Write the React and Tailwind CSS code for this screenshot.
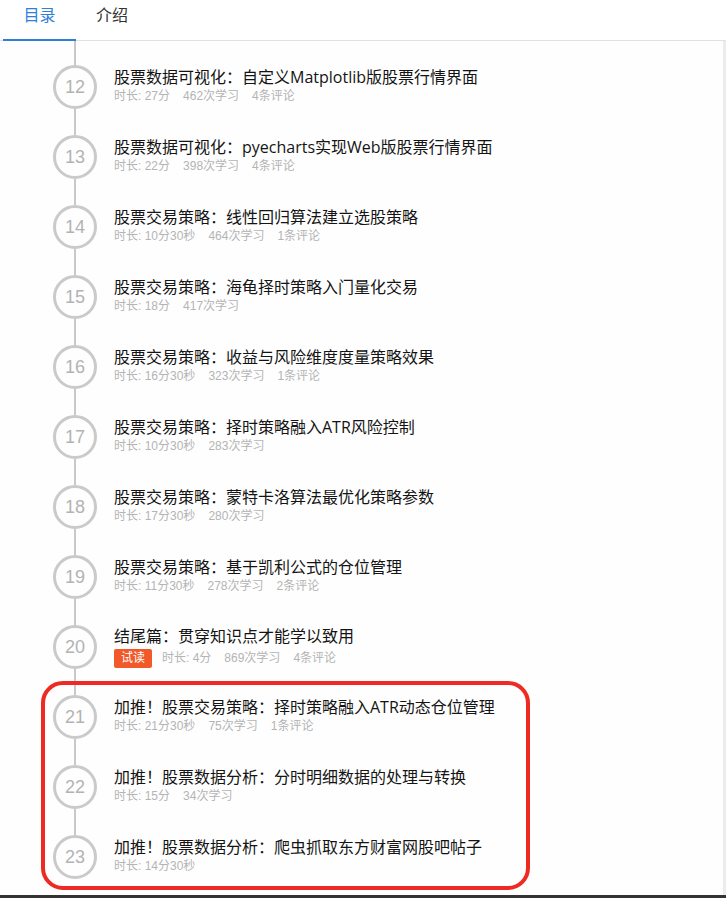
import React from "react";

const rows = [
  { n: 12, t: "股票数据可视化：自定义Matplotlib版股票行情界面", m: ["时长: 27分", "462次学习", "4条评论"] },
  { n: 13, t: "股票数据可视化：pyecharts实现Web版股票行情界面", m: ["时长: 22分", "398次学习", "4条评论"] },
  { n: 14, t: "股票交易策略：线性回归算法建立选股策略", m: ["时长: 10分30秒", "464次学习", "1条评论"] },
  { n: 15, t: "股票交易策略：海龟择时策略入门量化交易", m: ["时长: 18分", "417次学习"] },
  { n: 16, t: "股票交易策略：收益与风险维度度量策略效果", m: ["时长: 16分30秒", "323次学习", "1条评论"] },
  { n: 17, t: "股票交易策略：择时策略融入ATR风险控制", m: ["时长: 10分30秒", "283次学习"] },
  { n: 18, t: "股票交易策略：蒙特卡洛算法最优化策略参数", m: ["时长: 17分30秒", "280次学习"] },
  { n: 19, t: "股票交易策略：基于凯利公式的仓位管理", m: ["时长: 11分30秒", "278次学习", "2条评论"] },
  { n: 20, t: "结尾篇：贯穿知识点才能学以致用", m: ["时长: 4分", "869次学习", "4条评论"], trial: true },
  { n: 21, t: "加推！股票交易策略：择时策略融入ATR动态仓位管理", m: ["时长: 21分30秒", "75次学习", "1条评论"] },
  { n: 22, t: "加推！股票数据分析：分时明细数据的处理与转换", m: ["时长: 15分", "34次学习"] },
  { n: 23, t: "加推！股票数据分析：爬虫抓取东方财富网股吧帖子", m: ["时长: 14分30秒"] },
];

const cjk = { fontFamily: '"Open Sans", "Noto Sans CJK SC", sans-serif' };
const meta = { fontFamily: '"Liberation Sans", "Noto Sans CJK SC", sans-serif' };

function Row({ r, last }) {
  return (
    <div className="flex h-[70px] items-stretch">
      <div className="ml-[53px] flex w-[44px] shrink-0 flex-col items-center">
        <div className="w-[2px] flex-1 bg-[#c9c9c9]" />
        <div
          className="flex h-[44px] w-[44px] items-center justify-center rounded-full border-[3px] border-[#cacaca] text-[18px] text-[#b3b3b3]"
          style={meta}
        >
          {r.n}
        </div>
        <div className={last ? "flex-1" : "w-[2px] flex-1 bg-[#c9c9c9]"} />
      </div>
      <div className={"ml-[17px] flex flex-col justify-center " + (r.trial ? "pb-[1px]" : "pb-[4px]")}>
        <div className="text-[16px] leading-[20px] text-[#141414]" style={cjk}>
          {r.t}
        </div>
        <div className={"flex items-center text-[12px] leading-[16px] text-[#b4b4b4] " + (r.trial ? "mt-[3px]" : "mt-[1px]")} style={meta}>
          {r.trial && (
            <span className="mr-[10px] flex h-[19px] w-[38px] items-center justify-center rounded-[2px] bg-[#f2592a] text-[12px] text-white">
              试读
            </span>
          )}
          {r.m.map((x, i) => (
            <span key={i} className="mr-[13px]">
              {x}
            </span>
          ))}
        </div>
      </div>
    </div>
  );
}

export default function App() {
  return (
    <div className="relative h-[898px] w-[726px] overflow-hidden bg-white" style={cjk}>
      <div className="flex h-[41px] border-b border-[#e2e2e2]">
        <div className="relative flex w-[76px] items-start justify-center pl-[3px]">
          <span className="mt-[4px] text-[16px] leading-[22px] text-[#2f7ed8]">目录</span>
          <div className="absolute bottom-[-1px] left-[3px] h-[2px] w-[73px] bg-[#2f7ed8]" />
        </div>
        <div className="ml-[20px] mt-[4px] text-[16px] leading-[22px] text-[#333]">介绍</div>
      </div>
      <div className="h-[854px] border-r-[3px] border-[#ececec] bg-[#fefefe]">
        <div className="flex h-[11px]">
          <div className="ml-[74px] w-[2px] bg-[#c9c9c9]" />
        </div>
        {rows.map((r, i) => (
          <Row key={r.n} r={r} last={i === rows.length - 1} />
        ))}
      </div>
      <div className="h-[3px] bg-[#333]" />
      <div className="pointer-events-none absolute left-[41px] top-[681px] h-[209px] w-[489px] rounded-[22px] border-[4px] border-[#ee2b22]" />
    </div>
  );
}
